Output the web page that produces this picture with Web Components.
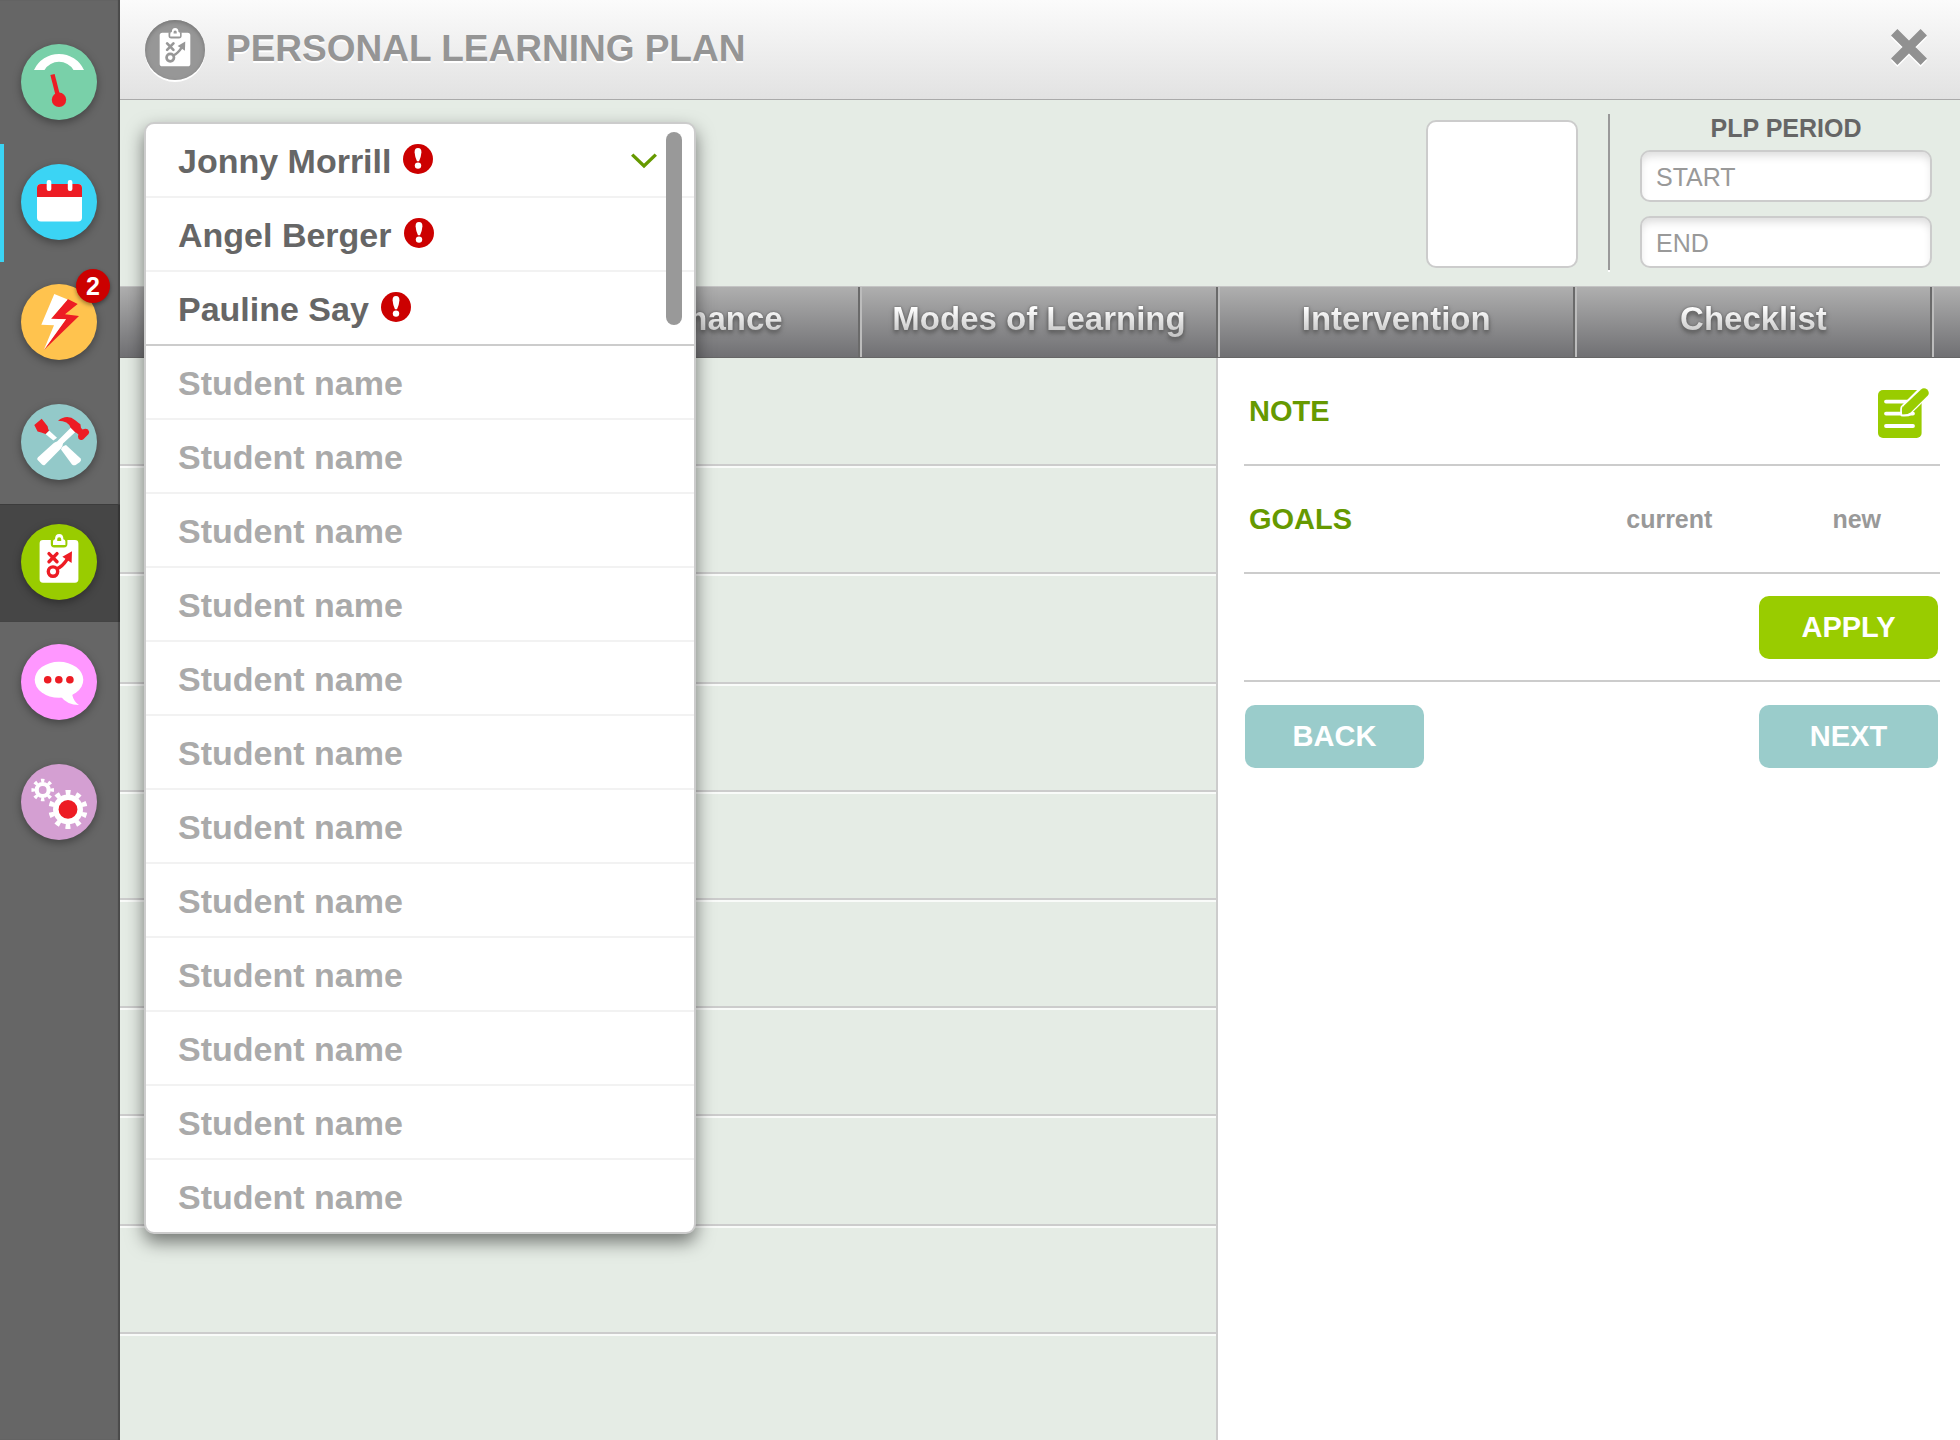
<!DOCTYPE html>
<html lang="en">
<head>
<meta charset="utf-8">
<title>Personal Learning Plan</title>
<style>
  html, body { margin: 0; height: 100%; }
  body { font-family: "Liberation Sans", Arial, sans-serif; background: #e5ece5; color: #666; }
</style>
</head>
<body>
<plp-app>
  <nav-rail slot="rail">
    <nav-item icon="gauge" label="Dashboard" style="--disc:#79d0a9"></nav-item>
    <nav-item icon="calendar" label="Calendar" marked style="--disc:#3bd4f4"></nav-item>
    <nav-item icon="bolt" label="Alerts" badge="2" style="--disc:#ffc34e"></nav-item>
    <nav-item icon="tools" label="Tools" style="--disc:#93c9c9"></nav-item>
    <nav-item icon="clipboard" label="Learning plan" active style="--disc:#99cc00"></nav-item>
    <nav-item icon="chat" label="Messages" style="--disc:#ff97ff"></nav-item>
    <nav-item icon="gears" label="Settings" style="--disc:#d49fd2"></nav-item>
  </nav-rail>

  <page-header slot="header">PERSONAL LEARNING PLAN</page-header>

  <info-strip slot="info">
    <student-menu slot="menu">
      <student-option alert open>Jonny Morrill</student-option>
      <student-option alert>Angel Berger</student-option>
      <student-option alert last-alert>Pauline Say</student-option>
      <student-option muted>Student name</student-option>
      <student-option muted>Student name</student-option>
      <student-option muted>Student name</student-option>
      <student-option muted>Student name</student-option>
      <student-option muted>Student name</student-option>
      <student-option muted>Student name</student-option>
      <student-option muted>Student name</student-option>
      <student-option muted>Student name</student-option>
      <student-option muted>Student name</student-option>
      <student-option muted>Student name</student-option>
      <student-option muted>Student name</student-option>
      <student-option muted>Student name</student-option>
    </student-menu>
    <period-form slot="period"></period-form>
  </info-strip>

  <tab-bar slot="tabs">
    <tab-item></tab-item>
    <tab-item>Performance</tab-item>
    <tab-item>Modes of Learning</tab-item>
    <tab-item>Intervention</tab-item>
    <tab-item>Checklist</tab-item>
  </tab-bar>

  <plan-rows slot="rows"></plan-rows>

  <side-panel slot="panel">
    <panel-row heading="NOTE"><note-button></note-button></panel-row>
    <panel-row heading="GOALS"><goal-columns></goal-columns></panel-row>
    <panel-row><action-button kind="primary">APPLY</action-button></panel-row>
    <panel-row plain><action-button slot="start">BACK</action-button><action-button>NEXT</action-button></panel-row>
  </side-panel>
</plp-app>

<script>
const define = (name, html, setup) => {
  const template = document.createElement('template');
  template.innerHTML = html;
  customElements.define(name, class extends HTMLElement {
    constructor() {
      super();
      this.attachShadow({ mode: 'open' }).append(template.content.cloneNode(true));
    }
    connectedCallback() {
      if (setup && !this.ready) { this.ready = true; setup(this, this.shadowRoot); }
    }
  });
};

/* Glyphs share a 76 x 76 box, the size of a rail disc. */
const glyphs = {
  gauge: `<path fill="#fff" d="M13 26A27.5 27.5 0 0 1 63 26H52.5A17 17 0 0 0 23.5 26Z"/>
    <path stroke="#ed1c24" stroke-width="4.4" d="M31.5 30.5L38 56"/><circle cx="38" cy="55.8" r="7.2" fill="#ed1c24"/>`,
  calendar: `<rect x="16" y="20" width="45" height="37.4" rx="4" fill="#fff"/>
    <path fill="#ed1c24" d="M16 33V24a4 4 0 0 1 4-4H57a4 4 0 0 1 4 4V33Z"/>
    <rect x="25.7" y="16" width="4.6" height="11" rx="2" fill="#fff"/><rect x="46.8" y="16" width="4.6" height="11" rx="2" fill="#fff"/>`,
  bolt: `<path fill="#ed1c24" d="M46.7 15L56.7 20L44 30.3L58 32L22.7 66.3L45 35H30Z"/>
    <path fill="#fff" d="M33.3 10L46.7 15.5L30 34.7L45 35.3L22.7 66.3L33 41.3L20.3 40.7Z"/>`,
  tools: `<path fill="#ed1c24" d="M13.3 21L20.7 14.8L26.6 22.3Q27 25 28 26.6L24.6 30Q20 28 16.6 27.4Z"/>
    <path fill="#fff" d="M24.7 30.2L28.3 26.8L36 33.7L32.4 36.4Z"/>
    <path fill="#fff" d="M40 45.4Q41 42 45 41L59.6 54.4Q60.8 56 59 58L55 60.8Q53 62 51 60.4Z"/>
    <path fill="#fff" d="M50 23.5L54.4 28L42 39.6Q41.8 42.4 40 44.4L24 60.8Q22.6 62 21 60.6L16.4 55.8Q15.8 54.6 17 53.2L32.2 39.4Q34 38 36 37.6Z"/>
    <path fill="#ed1c24" d="M37 16.8Q46 9.6 54.6 16.4Q57 18.4 59.4 20.2Q59.4 24 61.6 25.6Q64.6 24 67 25.6Q69 28 67.6 30L62.4 35.2Q59 37.2 57.4 34.6Q56.6 32 57.4 30.4Q55.6 28.6 54.2 28.2L49.6 23.8Q47.4 17 37 16.8Z"/>`,
  clipboard: `<path fill="#fff" d="M22 16H54a3.4 3.4 0 0 1 3.4 3.4V55.3a3.4 3.4 0 0 1-3.4 3.4H22a3.4 3.4 0 0 1-3.4-3.4V19.4A3.4 3.4 0 0 1 22 16Z"/>
    <path fill="var(--disc)" d="M29.8 15.6H46.4V20a3.4 3.4 0 0 1-3.4 3.4H33.2a3.4 3.4 0 0 1-3.4-3.4Z"/>
    <path fill="#fff" fill-rule="evenodd" d="M32 21V17.6Q32 15.4 34 15.2Q34 10 38.2 10Q42.4 10 42.4 15.2Q44.4 15.4 44.4 17.6V21ZM38.200 13.200a2 2 0 0 0-2 2V17H40.200V15.200a2 2 0 0 0-2-2Z"/>
    <g fill="none" stroke="var(--mark,#ed1c24)" stroke-width="3.4" stroke-linecap="round"><path d="M28 29.6L36 37.8M36 29.6L28 37.8"/><circle cx="32" cy="47.6" r="4.7"/><path stroke-width="3.2" stroke-linecap="butt" d="M36 44.8Q41.4 42.6 46.4 35"/></g>
    <path fill="var(--mark,#ed1c24)" d="M51 27.2L41.4 32.8L50.6 39Z"/>`,
  chat: `<ellipse cx="38" cy="35.8" rx="24.3" ry="18" fill="#fff"/><path fill="#fff" d="M40 52.8Q46 61 58 61Q52.6 57.6 51 50Z"/>
    <g fill="#ed1c24"><circle cx="26.7" cy="35.8" r="3.8"/><circle cx="37.8" cy="35.8" r="3.8"/><circle cx="48.9" cy="35.8" r="3.8"/></g>`,
  gears: `<g fill="none" stroke="#fff"><circle cx="21.7" cy="26" r="6" stroke-width="4.2"/>
    <circle cx="21.7" cy="26" r="9.4" stroke-width="3.8" pathLength="16" stroke-dasharray="0.9 1.1" transform="rotate(-10 21.7 26)"/>
    <circle cx="47" cy="45.4" r="17" stroke-width="5" pathLength="20" stroke-dasharray="0.9 1.1" transform="rotate(10 47 45.4)"/></g>
    <circle cx="47" cy="45.4" r="15" fill="#fff"/><circle cx="47" cy="45.4" r="9.4" fill="#ed1c24"/>`
};

define('app-icon', `
  <style>:host { display: block; } svg { display: block; width: 100%; height: 100%; }</style>
  <svg viewBox="0 0 76 76" fill="none" aria-hidden="true"></svg>`,
  (el, root) => { root.querySelector('svg').innerHTML = glyphs[el.getAttribute('name')]; });

define('plp-app', `
  <style>
    :host { display: flex; min-height: 100vh; }
    main { flex: 1; min-width: 0; display: flex; flex-direction: column; }
    .body { flex: 1; display: grid; grid-template-columns: minmax(0, 1fr) 744px; }
    ::slotted(*) { min-width: 0; }
  </style>
  <slot name="rail"></slot>
  <main>
    <slot name="header"></slot>
    <slot name="info"></slot>
    <slot name="tabs"></slot>
    <div class="body"><slot name="rows"></slot><slot name="panel"></slot></div>
  </main>`);

define('nav-rail', `
  <style>
    :host { display: block; flex: none; width: 120px; box-sizing: border-box; padding-top: 24px; background: #666;
      box-shadow: inset -2px 0 1px #4a4a4a; }
    nav { display: flex; flex-direction: column; gap: 2px; }
  </style>
  <nav aria-label="Sections"><slot></slot></nav>`);

define('nav-item', `
  <style>
    :host { display: block; position: relative; padding: 20px 21px 22px; box-sizing: border-box; height: 118px; }
    :host([active]) { background: #464646; box-shadow: inset 0 1px #3c3c3c, inset -2px 0 1px #333; }
    :host([marked]) { box-shadow: inset 4px 0 #3bd4f4; }
    button { display: block; width: 76px; height: 76px; padding: 0; border: 0; border-radius: 50%;
      background: var(--disc); box-shadow: 0 3px 8px rgba(0,0,0,.35); }
    span { position: absolute; left: 76px; top: 5px; width: 34px; line-height: 34px; border-radius: 50%;
      background: #c00; color: #fff; font-size: 25px; font-weight: bold; text-align: center; box-shadow: 0 2px 4px rgba(0,0,0,.4); }
    span:empty { display: none; }
  </style>
  <button type="button"></button><span></span>`,
  (el, root) => {
    const icon = document.createElement('app-icon');
    icon.setAttribute('name', el.getAttribute('icon'));
    const button = root.querySelector('button');
    button.setAttribute('aria-label', el.getAttribute('label'));
    button.append(icon);
    root.querySelector('span').textContent = el.getAttribute('badge') || '';
  });

define('page-header', `
  <style>
    :host { display: flex; align-items: center; box-sizing: border-box; height: 100px; padding: 0 33px 0 25px;
      background: linear-gradient(#fbfbfb, #e2e2e2); border-bottom: 1px solid #aaa; }
    app-icon { --disc: #979797; --mark: #979797; width: 60px; height: 60px; border-radius: 50%; background: #979797;
      box-shadow: inset 0 2px 4px #777, 0 2px #fff; }
    h1 { flex: 1; margin: 0 0 0 21px; padding-bottom: 2px; font-size: 37px; line-height: 42px; color: #959595; text-shadow: 0 2px #fff; }
    button { padding: 0 0 6px; border: 0; background: none; }
    svg { display: block; filter: drop-shadow(0 2px #fff); }
  </style>
  <app-icon name="clipboard"></app-icon>
  <h1><slot></slot></h1>
  <button type="button" aria-label="Close"><svg width="36" height="36" viewBox="0 0 36 36"><path d="M3.2 3.2L32.8 32.8M32.8 3.2L3.2 32.8" stroke="#919191" stroke-width="9"/></svg></button>`);

define('info-strip', `
  <style>
    :host { display: flex; justify-content: flex-end; position: relative; box-sizing: border-box; height: 186px; padding: 14px 28px 16px 24px; }
    .photo { width: 152px; height: 148px; margin-top: 6px; box-sizing: border-box; border: 2px solid #ccc; border-radius: 10px; background: #fff; }
    .rule { width: 2px; margin: 0 30px; background: #999; box-shadow: 0 2px #fff; }
    ::slotted(student-menu) { position: absolute; z-index: 2; left: 24px; top: 22px; }
  </style>
  <slot name="menu"></slot>
  <div class="photo"></div>
  <div class="rule"></div>
  <slot name="period"></slot>`);

define('period-form', `
  <style>
    :host { display: block; width: 292px; }
    form { display: flex; flex-direction: column; gap: 14px; }
    h2 { margin: 0 0 -6px; font-size: 25px; line-height: 28px; text-align: center; color: #666; }
    label { display: block; }
    input { display: block; box-sizing: border-box; width: 100%; height: 52px; padding: 2px 14px 0; border: 2px solid #ccc; border-radius: 10px;
      background: #fff; box-shadow: inset 0 6px 8px -2px #ddd; font: 25px "Liberation Sans", Arial, sans-serif; color: #666; }
    input::placeholder { color: #999; opacity: 1; }
  </style>
  <form>
    <h2>PLP PERIOD</h2>
    <label><input type="text" placeholder="START" aria-label="Start"></label>
    <label><input type="text" placeholder="END" aria-label="End"></label>
  </form>`);

define('student-menu', `
  <style>
    :host { display: block; width: 552px; box-sizing: border-box; border: 2px solid #ccc; border-radius: 10px; background: #fff;
      box-shadow: 0 8px 18px rgba(0,0,0,.5); }
    .thumb { position: absolute; right: 12px; top: 8px; width: 16px; height: 193px; border-radius: 8px; background: #999; }
  </style>
  <div role="listbox" aria-label="Student"><slot></slot></div>
  <div class="thumb"></div>`);

define('student-option', `
  <style>
    :host { display: block; border-bottom: 2px solid #f2f2f2; color: #666; }
    :host([last-alert]) { border-color: #ccc; }
    :host(:last-child) { border-bottom: 0; }
    :host([muted]) { color: #aaa; }
    button { display: flex; align-items: center; gap: 12px; width: 100%; height: 72px; padding: 2px 37px 0 32px; border: 0; background: none;
      color: inherit; font: bold 34px "Liberation Sans", Arial, sans-serif; text-align: left; }
    svg { display: none; flex: none; }
    :host([alert]) .alert, :host([open]) .arrow { display: block; }
    .alert { margin-bottom: 4px; }
    .arrow { margin-left: auto; }
  </style>
  <button type="button" role="option">
    <slot></slot>
    <svg class="alert" width="30" height="30" viewBox="0 0 30 30"><circle cx="15" cy="15" r="15" fill="#c00"/><path fill="#fff" d="M15 4Q18.6 4 18.4 8.4Q18 13.6 16 17.2H14Q12 13.6 11.6 8.4Q11.4 4 15 4Z"/><circle cx="15" cy="21.6" r="3.2" fill="#fff"/></svg>
    <svg class="arrow" width="26" height="16" viewBox="0 0 26 16"><path d="M1.2 1.6L13 13L24.8 1.6" fill="none" stroke="#669900" stroke-width="3.4"/></svg>
  </button>`);

define('tab-bar', `
  <style>
    :host { display: flex; box-sizing: border-box; height: 72px; padding: 0 28px; border-top: 1px solid #c4c4c4; border-bottom: 1px solid #666;
      background: linear-gradient(#afafaf, #707073); }
    ::slotted(*) { flex: 1; }
  </style>
  <slot></slot>`);

define('tab-item', `
  <style>
    :host { display: block; box-sizing: border-box; border-left: 2px solid #bcbcbc; border-right: 2px solid #6a6a6a; }
    :host(:first-child) { border-left: 0; }
    :host(:last-child) { box-shadow: 2px 0 #bcbcbc; }
    button { display: flex; align-items: center; justify-content: center; width: 100%; height: 100%; padding: 0 0 6px; border: 0; background: none; }
    span { font: bold 33px/38px "Liberation Sans", Arial, sans-serif; color: #e4e4e4; white-space: nowrap;
      background: linear-gradient(#fff 20%, #c8c8c8 85%); background-clip: text; -webkit-background-clip: text; -webkit-text-fill-color: transparent;
      filter: drop-shadow(0 0 1px #666) drop-shadow(0 3px 2px #5c5c5c); }
  </style>
  <button type="button" role="tab"><span><slot></slot></span></button>`);

define('plan-rows', `
  <style>
    :host { display: block; }
    div { box-sizing: border-box; height: 108px; border-bottom: 2px solid #ccc; box-shadow: inset 0 2px #f9fbf9; }
    div:first-of-type { box-shadow: none; }
    div:nth-of-type(3), div:nth-of-type(8) { height: 110px; }
    div:last-of-type { height: 100px; border: 0; }
  </style>
  <div></div><div></div><div></div><div></div><div></div><div></div><div></div><div></div><div></div><div></div>`);

define('side-panel', `
  <style>
    :host { display: block; padding: 0 20px 0 26px; border-left: 2px solid #ccc; background: #fff; }
  </style>
  <slot></slot>`);

define('panel-row', `
  <style>
    :host { display: flex; align-items: center; justify-content: space-between; box-sizing: border-box; height: 108px;
      padding: 0 2px 0 1px; border-bottom: 2px solid #ccc; }
    :host([plain]) { border: 0; }
    h2 { margin: 0 0 0 4px; font-size: 29px; line-height: 34px; color: #669900; }
    h2:empty { display: none; }
    .end { margin-left: auto; }
  </style>
  <h2></h2><slot name="start"></slot><div class="end"><slot></slot></div>`,
  (el, root) => { root.querySelector('h2').textContent = el.getAttribute('heading') || ''; });

define('note-button', `
  <style>:host { display: block; margin-right: 9px; } button { display: block; padding: 4px 0 0; border: 0; background: none; } svg { display: block; }</style>
  <button type="button" aria-label="Edit note"><svg width="51" height="50" viewBox="0 0 51 50" fill="none">
    <rect y="2" width="43.6" height="48" rx="5" fill="#99cc00"/>
    <path d="M8 13.6H36M8 25.6H35M8 38H35" stroke="#fff" stroke-width="3.8" stroke-linecap="round"/>
    <path d="M28 22L47 3" stroke="#fff" stroke-width="12.6"/>
    <path d="M24 26.4Q23.2 20.6 25.6 18L43 1.4Q46-1.2 49.2 1.6Q52.2 5 49.6 7.8L32.6 24.4Q29.6 26.8 24 26.4Z" fill="#99cc00"/>
    <path d="M23.4 27.6Q22.4 20 24 18M23 27.4Q30 28.4 33 26" stroke="#fff" stroke-width="1.8"/>
  </svg></button>`);

define('goal-columns', `
  <style>:host { display: flex; gap: 120px; margin-right: 57px; font-size: 25px; line-height: 30px; font-weight: bold; color: #999; }</style>
  <span>current</span><span>new</span>`);

define('action-button', `
  <style>
    :host { display: block; }
    button { display: block; width: 179px; height: 63px; padding: 0; border: 0; border-radius: 10px; background: #9acccb; color: #fff;
      font: bold 29px "Liberation Sans", Arial, sans-serif; }
    :host([kind="primary"]) button { background: #99cc00; }
  </style>
  <button type="button"><slot></slot></button>`);
</script>
</body>
</html>
